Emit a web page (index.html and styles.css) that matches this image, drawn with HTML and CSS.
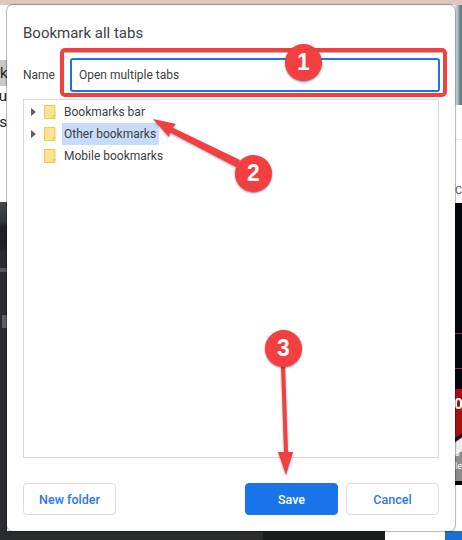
FILE: index.html
```html
<!DOCTYPE html>
<html lang="en">
<head>
    <meta charset="UTF-8">
    <title>Bookmark all tabs</title>
    <link rel="stylesheet" href="styles.css">
</head>
<body>
    <!-- Page behind the dialog -->
    <div class="backdrop">
        <div class="top-strip"></div>
        <div class="left-page">
            <span class="cut-text cut-k">k</span>
            <span class="cut-text cut-u">u</span>
            <span class="cut-text cut-s">s</span>
        </div>
        <div class="left-dark">
            <div class="blob blob-one"></div>
            <div class="blob blob-two"></div>
        </div>
        <div class="right-photo"></div>
        <div class="right-page"><span class="cut-c">C</span></div>
        <div class="right-dark"><div class="right-frame"></div></div>
        <div class="right-ad">
            <div class="ad-ring"></div>
            <span class="ad-text">s<br>le</span>
        </div>
        <div class="right-black"></div>
        <div class="bottom-dark"></div>
        <div class="bottom-blue"></div>
    </div>

    <!-- Dialog -->
    <div class="dialog">
        <h1 class="dialog-title">Bookmark all tabs</h1>
        <div class="name-row">
            <label class="name-label" for="nameInput">Name</label>
            <input class="name-input" id="nameInput" type="text" value="Open multiple tabs">
        </div>
        <div class="tree">
            <div class="tree-row">
                <span class="caret"></span>
                <svg class="folder" viewBox="0 0 12 14"><path d="M.5.5h10.500v13H.5z" fill="#fde293" stroke="#eecb4d"/><path d="M9 13.500v-3h2.500" fill="none" stroke="#eecb4d"/></svg>
                <span class="tree-label">Bookmarks bar</span>
            </div>
            <div class="tree-row">
                <span class="caret"></span>
                <svg class="folder" viewBox="0 0 12 14"><path d="M.5.5h10.500v13H.5z" fill="#fde293" stroke="#eecb4d"/><path d="M9 13.500v-3h2.500" fill="none" stroke="#eecb4d"/></svg>
                <span class="tree-label selected">Other bookmarks</span>
            </div>
            <div class="tree-row">
                <span class="caret none"></span>
                <svg class="folder" viewBox="0 0 12 14"><path d="M.5.5h10.500v13H.5z" fill="#fde293" stroke="#eecb4d"/><path d="M9 13.500v-3h2.500" fill="none" stroke="#eecb4d"/></svg>
                <span class="tree-label">Mobile bookmarks</span>
            </div>
        </div>
        <div class="button-row">
            <button class="btn">New folder</button>
            <button class="btn primary">Save</button>
            <button class="btn">Cancel</button>
        </div>
    </div>

    <!-- Red callouts drawn on top of the screenshot -->
    <div class="callout-box"></div>
    <svg class="arrows" width="462" height="540" viewBox="0 0 462 540">
        <g fill="#f33f3f">
            <path d="M153 119 L176 124 L172.500 127.500 L240 160 L236 167 L170 132.500 L169 137 Z"/>
            <path d="M281 366 L285 366 L288 452 L293 452 L286 475 L278 452 L284 452 Z"/>
        </g>
    </svg>
    <div class="badge badge-one">1</div>
    <div class="badge badge-two">2</div>
    <div class="badge badge-three">3</div>
</body>
</html>
```

FILE: styles.css
```css
body {
    margin: 0;
    width: 462px;
    height: 540px;
    position: relative;
    overflow: hidden;
    background: #fff;
    font-family: 'Roboto', 'Liberation Sans', sans-serif;
    color: #3c4043;
}

/* Page behind the dialog */
.backdrop div {
    position: absolute;
}

.top-strip {
    left: 0;
    top: 0;
    width: 462px;
    height: 5px;
    background: #dcc8c0;
}

.left-page {
    left: 0;
    top: 5px;
    width: 7px;
    height: 197px;
    background: #fff;
    overflow: hidden;
}

.cut-text {
    position: absolute;
    right: 0;
    font-size: 15px;
    color: #222;
}

.cut-k {
    top: 55px;
    width: 7px;
    height: 26px;
    line-height: 26px;
    text-align: right;
    background: #c8c8c8;
}

.cut-u {
    top: 82px;
}

.cut-s {
    top: 108px;
}

.left-dark {
    left: 0;
    top: 202px;
    width: 7px;
    height: 338px;
    background: linear-gradient(#45484b, #35383b 20px, #1f2125 24px, #1f2125 44px, #2a2c30 50px);
}

.blob {
    left: 0;
    width: 7px;
    background: #54575a;
}

.blob-one {
    top: 66px;
    height: 4px;
}

.blob-two {
    top: 113px;
    left: 2px;
    width: 5px;
    height: 13px;
    background: #5c5e61;
}

.right-photo {
    left: 455px;
    top: 5px;
    width: 7px;
    height: 100px;
    background: linear-gradient(to right, #e4eaea, #8aa3a7 4px, #5f8087 5px);
}

.right-page {
    left: 455px;
    top: 105px;
    width: 7px;
    height: 98px;
    background: linear-gradient(#fff 34px, #e6e6e6 34px, #e6e6e6 35px, #fff 35px);
    overflow: hidden;
}

.cut-c {
    position: absolute;
    left: 0;
    top: 79px;
    font-size: 11px;
    color: #555;
}

.right-dark {
    left: 455px;
    top: 203px;
    width: 7px;
    height: 186px;
    background: #05070f;
}

.backdrop .right-frame {
    left: 0;
    top: 130px;
    width: 7px;
    height: 36px;
    border-top: 1px solid #7a3a4a;
    border-bottom: 1px solid #7a3a4a;
    box-sizing: border-box;
}

.right-ad {
    left: 455px;
    top: 389px;
    width: 7px;
    height: 92px;
    background: linear-gradient(145deg, #a81010 0, #a81010 50%, #111 51%, #111 54%, #ececec 56%, #ececec 68%, #8c8c8c 70%);
    overflow: hidden;
}

.backdrop .ad-ring {
    left: 0;
    top: 9px;
    width: 7px;
    height: 11px;
    box-sizing: border-box;
    border: 2px solid #fff;
    border-radius: 4px;
}

.ad-text {
    position: absolute;
    left: 0;
    top: 58px;
    font-size: 9px;
    line-height: 13px;
    color: #fff;
}

.right-black {
    left: 455px;
    top: 481px;
    width: 7px;
    height: 4px;
    background: #05070f;
}

.bottom-dark {
    left: 0;
    top: 531px;
    width: 385px;
    height: 9px;
    background: linear-gradient(to right, #2a2c30 263px, #1c1d1f 263px);
}

.bottom-blue {
    left: 445px;
    top: 531px;
    width: 17px;
    height: 9px;
    background: #1a6fd0;
}

/* Dialog */
.dialog {
    position: absolute;
    left: 7px;
    top: 5px;
    width: 448px;
    height: 526px;
    box-sizing: border-box;
    padding: 20px 16px 16px;
    background: #fff;
    border-radius: 6px;
    box-shadow: 0 0 1px 1px rgba(0, 0, 0, 0.3);
    display: flex;
    flex-direction: column;
}

.dialog-title {
    margin: 0;
    font-size: 15px;
    font-weight: 400;
    line-height: 16px;
    height: 33px;
    color: #3c4043;
}

.name-row {
    display: flex;
    align-items: center;
    height: 34px;
    margin-right: -1px;
}

.name-label {
    width: 47px;
    font-size: 12px;
}

.name-input {
    flex: 1;
    height: 34px;
    box-sizing: border-box;
    border: 2px solid #1a73e8;
    border-radius: 3px;
    padding: 0 7px;
    font: inherit;
    font-size: 12px;
    color: #3c4043;
    outline: none;
}

.tree {
    flex: 1;
    margin-top: 7px;
    padding-top: 1px;
    border: 1px solid #d9d9d9;
}

.tree-row {
    display: flex;
    align-items: center;
    height: 22px;
    font-size: 12px;
}

.caret {
    width: 0;
    height: 0;
    margin-left: 7px;
    border-left: 5px solid #5f5f5f;
    border-top: 4px solid transparent;
    border-bottom: 4px solid transparent;
}

.caret.none {
    visibility: hidden;
}

.folder {
    width: 12px;
    height: 14px;
    margin-left: 8px;
}

.tree-label {
    margin-left: 8px;
    line-height: 22px;
}

.selected {
    margin-left: 6px;
    background: #c6dcf8;
    padding: 0 3px 0 2px;
}

.button-row {
    display: flex;
    gap: 8px;
    margin-top: 25px;
}

.btn {
    height: 32px;
    width: 93px;
    box-sizing: border-box;
    border: 1px solid #dadce0;
    border-radius: 4px;
    background: #fff;
    color: #2a77e8;
    font: inherit;
    font-size: 12.5px;
    font-weight: 500;
}

.btn:first-child {
    margin-right: auto;
}

.btn.primary {
    background: #1a73e8;
    border-color: #1a73e8;
    color: #fff;
}

/* Callouts */
.callout-box {
    position: absolute;
    left: 60px;
    top: 48px;
    width: 387px;
    height: 49px;
    box-sizing: border-box;
    border: 4px solid #f33f3f;
    border-radius: 5px;
    box-shadow: inset 0 1px 1px rgba(0, 0, 0, 0.3);
}

.arrows {
    position: absolute;
    left: 0;
    top: 0;
    filter: drop-shadow(0 1px 1px rgba(0, 0, 0, 0.35));
}

.badge {
    position: absolute;
    width: 37px;
    height: 37px;
    border-radius: 50%;
    background: #f33f3f;
    box-shadow: 0 1px 2px rgba(0, 0, 0, 0.5);
    color: #fff;
    font-family: 'Liberation Sans', sans-serif;
    font-size: 23px;
    font-weight: 700;
    line-height: 37px;
    text-align: center;
}

.badge-one {
    left: 285px;
    top: 44px;
}

.badge-two {
    left: 235px;
    top: 155px;
}

.badge-three {
    left: 265px;
    top: 330px;
}
```
